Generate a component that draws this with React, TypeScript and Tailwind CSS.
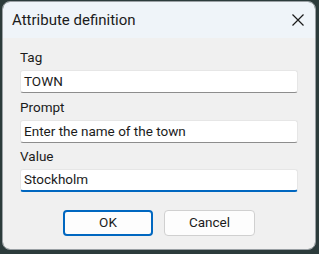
import React from "react";

const font = { fontFamily: 'Roboto, "Noto Sans", sans-serif' };

function Field({ label, value, focused, labelH }: { label: string; value: string; focused?: boolean; labelH: string }) {
  return (
    <div className="flex flex-col">
      <div className={`${labelH} flex items-center pt-[2px] text-[13.5px] text-[#1b1b1b] leading-none`}>{label}</div>
      <div
        className={
          focused
            ? "h-[23px] bg-white rounded-[3px] border border-[#e6e6e6] border-b-2 border-b-[#0067c0] flex items-center pl-[3px] text-[13.5px] text-[#1b1b1b] leading-none"
            : "h-[23px] bg-white rounded-[3px] border border-[#e6e6e6] border-b-[#8d8d8d] flex items-center pl-[3px] text-[13.5px] text-[#1b1b1b] leading-none"
        }
      >
        {value}
      </div>
    </div>
  );
}

export default function App() {
  return (
    <div className="w-[319px] h-[254px] bg-[#2c3b3b] pt-[1px] pl-[2px] pr-[3px] pb-[4px]" style={font}>
      <div className="h-full flex flex-col rounded-[8px] overflow-hidden border border-[#9aa0a4]">
        <div className="h-[36px] shrink-0 bg-[#eff4f9] flex items-center justify-between pl-[9px] pr-[10px]">
          <span className="text-[15px] text-[#1b1b1b] leading-none">Attribute definition</span>
          <svg width="12" height="12" viewBox="0 0 12 12" className="mr-[1px]">
            <path d="M0.5 0.5 L11.5 11.5 M11.5 0.5 L0.5 11.5" stroke="#1b1b1b" strokeWidth="1.2" />
          </svg>
        </div>
        <div className="flex-1 bg-[#f0f0f0] pt-[5px] px-[17px] flex flex-col">
          <Field label="Tag" value="TOWN" labelH="h-[27px]" />
          <Field label="Prompt" value="Enter the name of the town" labelH="h-[27px]" />
          <Field label="Value" value="Stockholm" focused labelH="h-[26px]" />
          <div className="mt-[18px] flex justify-center gap-[11px]">
            <div className="w-[90px] h-[26px] rounded-[4px] border-2 border-[#0067c0] bg-[#fdfdfd] flex items-center justify-center text-[13.5px] text-[#1b1b1b] leading-none">OK</div>
            <div className="w-[91px] h-[26px] rounded-[4px] border border-[#d0d0d0] bg-[#fdfdfd] flex items-center justify-center text-[13.5px] text-[#1b1b1b] leading-none">Cancel</div>
          </div>
        </div>
      </div>
    </div>
  );
}
